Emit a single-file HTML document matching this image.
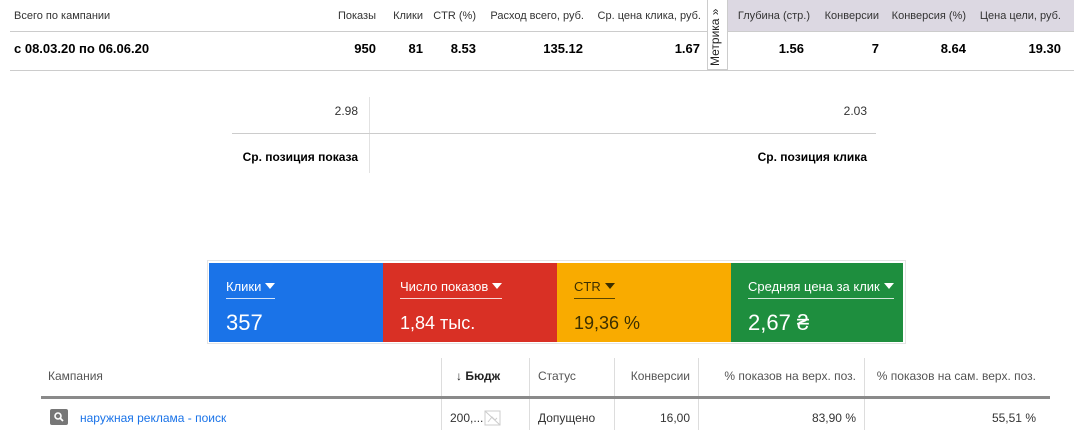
<!DOCTYPE html>
<html><head><meta charset="utf-8"><style>
body{margin:0;width:1074px;height:448px;background:#fff;position:relative;overflow:hidden;font-family:"Liberation Sans",sans-serif;}
.a{position:absolute;white-space:nowrap;}
.h{font-size:11px;color:#333;top:10px;}
.v{font-size:13px;font-weight:bold;color:#000;top:41px;}
.r{text-align:right;}
.card{position:absolute;top:263px;height:79px;color:#fff;}
.card .t{position:absolute;left:17px;top:16px;font-size:13px;padding-bottom:4px;border-bottom:1px solid rgba(255,255,255,.8);}
.card .n{position:absolute;left:17px;top:47px;font-size:22px;}
.tri{display:inline-block;width:0;height:0;border-left:5px solid transparent;border-right:5px solid transparent;border-top:6px solid currentColor;margin-left:4px;vertical-align:2px;}
.th{font-size:12px;color:#555;top:369px;}
.td{font-size:12px;color:#333;top:411px;}
.vl{position:absolute;width:1px;background:#ddd;}
</style></head><body>
<div class="a" style="left:727px;top:0;width:347px;height:31px;background:#dcd8e2"></div>
<div class="a" style="left:10px;top:31px;width:1064px;height:1px;background:#ccc"></div>
<div class="a" style="left:10px;top:70px;width:1064px;height:1px;background:#ccc"></div>
<div class="a" style="left:707px;top:0;width:21px;height:70px;background:#fff;border:1px solid #ccc;border-top:none;box-sizing:border-box"></div>
<div class="a" style="left:708px;top:66px;font-size:12px;color:#222;transform:rotate(-90deg);transform-origin:0 0;">Метрика »</div>
<div class="a h" style="left:14px">Всего по кампании</div>
<div class="a h r" style="right:698px">Показы</div>
<div class="a h r" style="right:651px">Клики</div>
<div class="a h r" style="right:598px">CTR (%)</div>
<div class="a h r" style="right:490px">Расход всего, руб.</div>
<div class="a h r" style="right:373px">Ср. цена клика, руб.</div>
<div class="a h r" style="right:264px">Глубина (стр.)</div>
<div class="a h r" style="right:195px">Конверсии</div>
<div class="a h r" style="right:108px">Конверсия (%)</div>
<div class="a h r" style="right:13px">Цена цели, руб.</div>
<div class="a v" style="left:14px">с 08.03.20 по 06.06.20</div>
<div class="a v r" style="right:698px">950</div>
<div class="a v r" style="right:651px">81</div>
<div class="a v r" style="right:598px">8.53</div>
<div class="a v r" style="right:491px">135.12</div>
<div class="a v r" style="right:374px">1.67</div>
<div class="a v r" style="right:270px">1.56</div>
<div class="a v r" style="right:195px">7</div>
<div class="a v r" style="right:108px">8.64</div>
<div class="a v r" style="right:13px">19.30</div>

<div class="a" style="left:369px;top:97px;width:1px;height:76px;background:#e2e2e2"></div>
<div class="a" style="left:232px;top:133px;width:644px;height:1px;background:#ccc"></div>
<div class="a r" style="right:716px;top:104px;font-size:12px;color:#333">2.98</div>
<div class="a r" style="right:207px;top:104px;font-size:12px;color:#333">2.03</div>
<div class="a r" style="right:716px;top:150px;font-size:12px;font-weight:bold">Ср. позиция показа</div>
<div class="a r" style="right:207px;top:150px;font-size:12px;font-weight:bold">Ср. позиция клика</div>

<div class="a" style="left:207px;top:260px;width:699px;height:84px;border:1px solid #e4e4e4;box-sizing:border-box"></div>
<div class="card" style="left:209px;width:174px;background:#1a73e8"><div class="t">Клики<span class="tri"></span></div><div class="n">357</div></div>
<div class="card" style="left:383px;width:174px;background:#d93025"><div class="t">Число показов<span class="tri"></span></div><div class="n" style="font-size:18px;top:50px">1,84 тыс.</div></div>
<div class="card" style="left:557px;width:174px;background:#f9ab00;color:#3c2f00"><div class="t" style="border-color:#5a4500">CTR<span class="tri"></span></div><div class="n" style="font-size:18px;top:50px">19,36 %</div></div>
<div class="card" style="left:731px;width:172px;background:#1e8e3e"><div class="t">Средняя цена за клик<span class="tri"></span></div><div class="n">2,67 ₴</div></div>

<div class="vl" style="left:441px;top:358px;height:72px"></div>
<div class="vl" style="left:529px;top:358px;height:72px"></div>
<div class="vl" style="left:614px;top:358px;height:72px"></div>
<div class="vl" style="left:698px;top:358px;height:72px"></div>
<div class="vl" style="left:864px;top:358px;height:72px"></div>
<div class="a" style="left:41px;top:396px;width:1009px;height:3px;background:#8a8a8a"></div>
<div class="a th" style="left:48px">Кампания</div>
<div class="a th" style="left:456px;color:#222;font-weight:bold">↓ Бюдж</div>
<div class="a th" style="left:538px">Статус</div>
<div class="a th r" style="right:384px">Конверсии</div>
<div class="a th r" style="right:218px">% показов на верх. поз.</div>
<div class="a th r" style="right:38px">% показов на сам. верх. поз.</div>
<div class="a" style="left:50px;top:409px;width:18px;height:16px;background:#777;border-radius:2px"></div>
<svg class="a" style="left:53px;top:411px" width="12" height="12" viewBox="0 0 12 12"><circle cx="5" cy="5" r="3" stroke="#fff" stroke-width="1.6" fill="none"/><path d="M7 7l3 3" stroke="#fff" stroke-width="1.8"/></svg>
<div class="a td" style="left:80px;color:#1a73e8">наружная реклама - поиск</div>
<div class="a td" style="left:450px">200,...</div>
<svg class="a" style="left:484px;top:410px" width="17" height="16" viewBox="0 0 17 16"><rect x="1" y="1" width="15" height="14" fill="none" stroke="#ccc"/><path d="M1 1l15 14M4 12l4-5 3 3 2-2" stroke="#ccc" fill="none"/></svg>
<div class="a td" style="left:538px">Допущено</div>
<div class="a td r" style="right:384px">16,00</div>
<div class="a td r" style="right:218px">83,90 %</div>
<div class="a td r" style="right:38px">55,51 %</div>
</body></html>
